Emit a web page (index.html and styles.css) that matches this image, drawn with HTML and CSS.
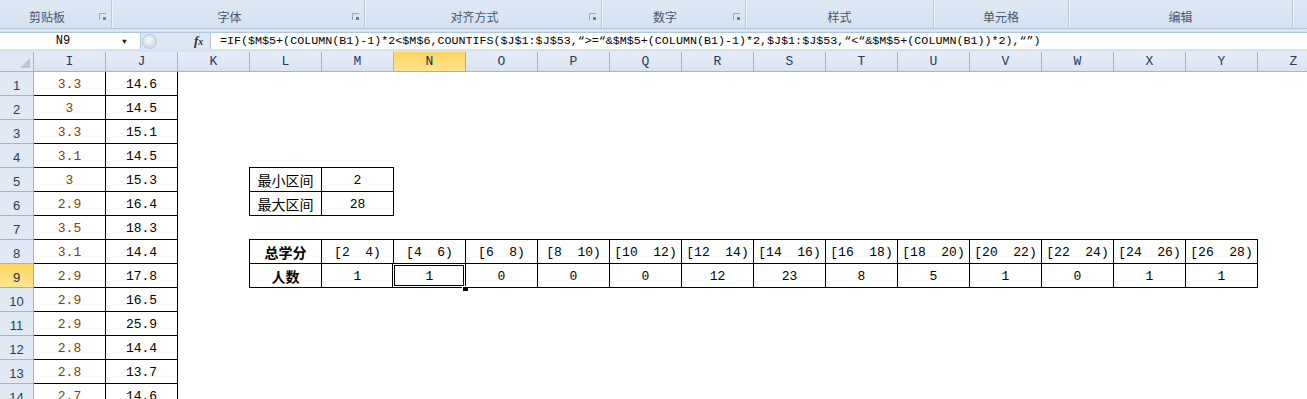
FILE: index.html
```html
<!DOCTYPE html>
<html>

<head>
    <meta charset="utf-8">
    <title>学分分布</title>
    <link rel="stylesheet" href="styles.css">
</head>

<body>
    <div class="ribbon">
        <div class="group g1"><span class="label">剪贴板</span><i class="launch"></i></div>
        <div class="group g2"><span class="label">字体</span><i class="launch"></i></div>
        <div class="group g3"><span class="label">对齐方式</span><i class="launch"></i></div>
        <div class="group g4"><span class="label">数字</span><i class="launch"></i></div>
        <div class="group g5"><span class="label">样式</span></div>
        <div class="group g6"><span class="label">单元格</span></div>
        <div class="group g7"><span class="label">编辑</span></div>
        <div class="group g8"></div>
    </div>

    <div class="bar-wrap">
        <div class="fbar">
            <div class="namebox"><span class="name">N9</span><span class="drop">&#9660;</span></div>
            <div class="fmid"><span class="knob"></span><span class="fx">f<small>x</small></span></div>
            <div class="formula">=IF($M$5+(COLUMN(B1)-1)*2&lt;$M$6,COUNTIFS($J$1:$J$53,“&gt;=“&amp;$M$5+(COLUMN(B1)-1)*2,$J$1:$J$53,“&lt;“&amp;$M$5+(COLUMN(B1))*2),“”)</div>
        </div>
    </div>

    <div class="sheet">
        <div class="row hrow">
            <div class="corner"><i></i></div>
            <div class="ch">I</div><div class="ch">J</div><div class="ch">K</div><div class="ch">L</div>
            <div class="ch">M</div><div class="ch on">N</div><div class="ch">O</div><div class="ch">P</div>
            <div class="ch">Q</div><div class="ch">R</div><div class="ch">S</div><div class="ch">T</div>
            <div class="ch">U</div><div class="ch">V</div><div class="ch">W</div><div class="ch">X</div>
            <div class="ch">Y</div><div class="ch">Z</div>
        </div>

        <div class="row"><div class="rh">1</div><div class="c b ci">3.3</div><div class="c b">14.6</div></div>
        <div class="row"><div class="rh">2</div><div class="c b ci">3</div><div class="c b">14.5</div></div>
        <div class="row"><div class="rh">3</div><div class="c b ci">3.3</div><div class="c b">15.1</div></div>
        <div class="row"><div class="rh">4</div><div class="c b ci">3.1</div><div class="c b">14.5</div></div>
        <div class="row">
            <div class="rh">5</div><div class="c b ci">3</div><div class="c b">15.3</div><div class="c"></div>
            <div class="c b cn tl">最小区间</div><div class="c b top">2</div>
        </div>
        <div class="row">
            <div class="rh">6</div><div class="c b ci">2.9</div><div class="c b">16.4</div><div class="c"></div>
            <div class="c b cn lf">最大区间</div><div class="c b">28</div>
        </div>
        <div class="row"><div class="rh">7</div><div class="c b ci">3.5</div><div class="c b">18.3</div></div>
        <div class="row">
            <div class="rh">8</div><div class="c b ci">3.1</div><div class="c b">14.4</div><div class="c"></div>
            <div class="c b cn bold tl">总学分</div>
            <div class="c b top">[2  4)</div><div class="c b top">[4  6)</div><div class="c b top">[6  8)</div>
            <div class="c b top">[8  10)</div><div class="c b top">[10  12)</div><div class="c b top">[12  14)</div>
            <div class="c b top">[14  16)</div><div class="c b top">[16  18)</div><div class="c b top">[18  20)</div>
            <div class="c b top">[20  22)</div><div class="c b top">[22  24)</div><div class="c b top">[24  26)</div>
            <div class="c b top">[26  28)</div>
        </div>
        <div class="row">
            <div class="rh on">9</div><div class="c b ci">2.9</div><div class="c b">17.8</div><div class="c"></div>
            <div class="c b cn bold lf">人数</div>
            <div class="c b">1</div><div class="c b sel">1</div><div class="c b">0</div><div class="c b">0</div>
            <div class="c b">0</div><div class="c b">12</div><div class="c b">23</div><div class="c b">8</div>
            <div class="c b">5</div><div class="c b">1</div><div class="c b">0</div><div class="c b">1</div>
            <div class="c b">1</div>
        </div>
        <div class="row"><div class="rh">10</div><div class="c b ci">2.9</div><div class="c b">16.5</div></div>
        <div class="row"><div class="rh">11</div><div class="c b ci">2.9</div><div class="c b">25.9</div></div>
        <div class="row"><div class="rh">12</div><div class="c b ci">2.8</div><div class="c b">14.4</div></div>
        <div class="row"><div class="rh">13</div><div class="c b ci">2.8</div><div class="c b">13.7</div></div>
        <div class="row"><div class="rh">14</div><div class="c b ci">2.7</div><div class="c b">14.6</div></div>
    </div>
</body>

</html>
```

FILE: styles.css
```css
html,
body {
    margin: 0;
    padding: 0;
    width: 1307px;
    height: 399px;
    overflow: hidden;
    background: #fff;
    font-family: "Liberation Sans", "Noto Sans CJK SC", sans-serif;
}

/* ribbon group labels */
.ribbon {
    display: flex;
    height: 29px;
    box-sizing: border-box;
    background: linear-gradient(#dfe9f5, #d6e2f1);
    border-bottom: 1px solid #b5c8de;
}

.group {
    position: relative;
    flex: none;
    box-sizing: border-box;
    display: flex;
    align-items: center;
    justify-content: center;
    border-right: 1px solid #b9cbe0;
    box-shadow: 1px 0 0 #eef4fb;
    padding-top: 5px;
}

.group .label {
    font-family: "Noto Sans CJK SC", sans-serif;
    font-size: 12px;
    color: #46576f;
}

.g1 { width: 112px; padding-right: 17px; }
.g2 { width: 253px; padding-right: 17px; }
.g3 { width: 237px; padding-right: 17px; }
.g4 { width: 144px; padding-right: 17px; }
.g5 { width: 188px; }
.g6 { width: 135px; }
.g7 { width: 224px; }
.g8 { flex: 1; border-right: none; }

.launch {
    position: absolute;
    right: 5px;
    top: 13px;
    width: 7px;
    height: 7px;
    box-sizing: border-box;
    border-top: 1px solid #9aa8ba;
    border-left: 1px solid #9aa8ba;
}

.launch::after {
    content: '';
    position: absolute;
    right: 0;
    bottom: 0;
    width: 3px;
    height: 3px;
    background: #6f7f95;
}

/* formula bar */
.bar-wrap {
    background: #d9e4f1;
    padding: 3px 0;
}

.fbar {
    display: flex;
    height: 17px;
    border-top: 1px solid #b4c6dc;
    box-sizing: border-box;
}

.namebox {
    width: 141px;
    flex: none;
    display: flex;
    align-items: center;
    background: #fff;
    border-right: 1px solid #b4c6dc;
    box-sizing: border-box;
    font-family: "Liberation Mono", monospace;
    font-size: 12px;
}

.namebox .name {
    flex: 1;
    text-align: center;
    padding-left: 4px;
}

.namebox .drop {
    width: 18px;
    font-size: 8px;
    color: #222;
}

.fmid {
    width: 69px;
    flex: none;
    display: flex;
    align-items: center;
    background: #dde8f5;
}

.knob {
    width: 15px;
    height: 15px;
    margin-left: 1px;
    box-sizing: border-box;
    border-radius: 50%;
    border: 1px solid #b9c6d6;
    background: radial-gradient(circle at 45% 40%, #f7f9fc 0, #dfe5ed 45%, #c4cfdc 100%);
}

.fx {
    margin-left: 37px;
    font-family: "Liberation Serif", serif;
    font-style: italic;
    font-weight: bold;
    font-size: 13px;
    color: #333;
}

.fx small {
    font-size: 10px;
}

.formula {
    flex: 1;
    background: #fff;
    border-left: 1px solid #b4c6dc;
    padding-left: 9px;
    font-family: "Liberation Mono", monospace;
    font-size: 11.7px;
    line-height: 16px;
    white-space: pre;
    color: #000;
}

/* sheet grid */
.sheet {
    display: flex;
    flex-direction: column;
}

.row {
    display: flex;
    height: 24px;
}

.hrow {
    height: 20px;
}

.corner {
    position: relative;
    width: 34px;
    flex: none;
    box-sizing: border-box;
    background: #dfe8f4;
    border-right: 1px solid #9eb6ce;
    border-bottom: 1px solid #9eb6ce;
}

.corner i {
    position: absolute;
    right: 3px;
    bottom: 3px;
    width: 0;
    height: 0;
    border-left: 10px solid transparent;
    border-bottom: 10px solid #b8c8da;
}

.ch {
    width: 72px;
    flex: none;
    box-sizing: border-box;
    display: flex;
    align-items: center;
    justify-content: center;
    background: linear-gradient(#e6edf7, #dae4f1);
    border-right: 1px solid #9eb6ce;
    border-bottom: 1px solid #9eb6ce;
    font-family: "Liberation Mono", monospace;
    font-size: 13px;
    color: #233d5f;
}

.ch.on,
.rh.on {
    background: linear-gradient(#ffd45c, #ffe590);
    border-color: #e2a53c;
    color: #14305a;
}

.rh {
    width: 34px;
    flex: none;
    box-sizing: border-box;
    display: flex;
    align-items: center;
    justify-content: center;
    padding-top: 3px;
    background: #e1e9f4;
    border-right: 1px solid #9eb6ce;
    border-bottom: 1px solid #9eb6ce;
    font-size: 13px;
    color: #233d5f;
}

.c {
    width: 72px;
    flex: none;
    box-sizing: border-box;
    display: flex;
    align-items: center;
    justify-content: center;
    padding-top: 2px;
    font-family: "Liberation Mono", monospace;
    font-size: 13px;
    white-space: pre;
    color: #000;
}

.c.b {
    border-right: 1px solid #000;
    border-bottom: 1px solid #000;
}

.c.ci {
    color: #7a4510;
}

.c.cn {
    font-family: "Noto Sans CJK SC", sans-serif;
    font-size: 14px;
    padding-top: 0;
}

.c.bold {
    font-weight: bold;
}

/* outer table edges drawn on the neighbouring grid line */
.c.top {
    box-shadow: 0 -1px 0 #000;
}

.c.lf {
    box-shadow: -1px 0 0 #000;
}

.c.tl {
    box-shadow: -1px 0 0 #000, 0 -1px 0 #000, -1px -1px 0 #000;
}

/* active cell frame and fill handle */
.c.sel {
    position: relative;
}

.c.sel::after {
    content: '';
    position: absolute;
    left: -2px;
    top: -1px;
    right: -1px;
    bottom: -1px;
    border: 1px solid #000;
    box-shadow: inset 0 0 0 1px #fff, inset 0 0 0 2px #000;
}

.c.sel::before {
    content: '';
    position: absolute;
    right: -3px;
    bottom: -4px;
    width: 5px;
    height: 4px;
    background: #000;
    border-top: 1px solid #fff;
    border-left: 1px solid #fff;
    z-index: 1;
}
```
